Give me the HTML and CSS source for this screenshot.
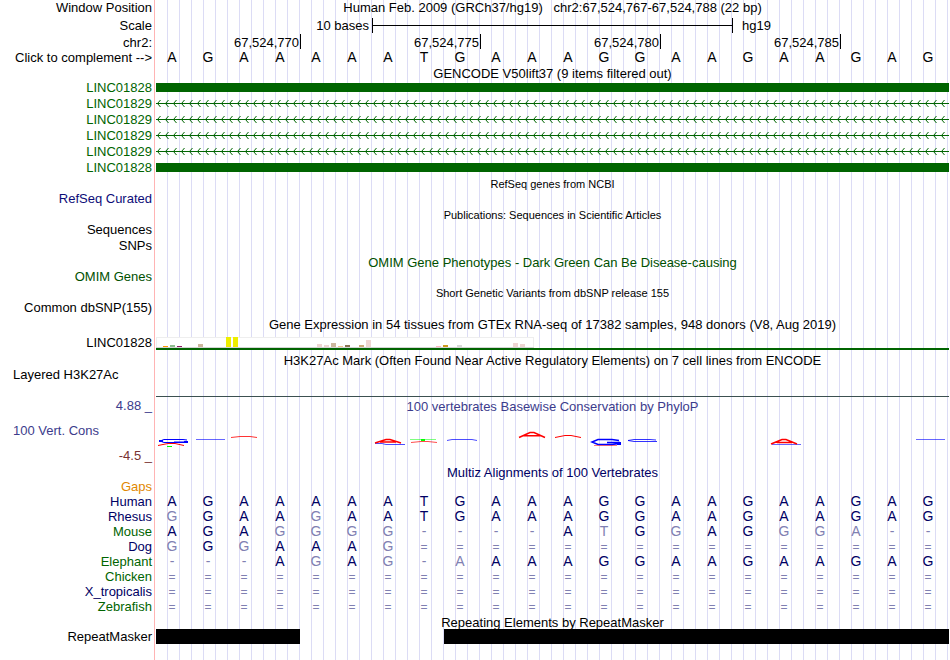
FILE: index.html
```
<!DOCTYPE html>
<html lang="en">
<head>
    <meta charset="UTF-8">
    <meta name="viewport" content="width=device-width, initial-scale=1.0">
    <title>chr2:67,524,767-67,524,788</title>
    <link rel="stylesheet" href="styles.css">
</head>
<body>
    <main class="browser">
        <!-- position, scale and ruler -->
        <div class="row">
            <div class="label">Window Position</div>
            <div class="title">Human Feb. 2009 (GRCh37/hg19) &nbsp; chr2:67,524,767-67,524,788 (22 bp)</div>
        </div>
        <div class="row scale-row">
            <div class="label">Scale</div>
            <div class="scale">
                <span class="scale-text">10 bases</span>
                <span class="scale-bar"></span>
                <span class="scale-db">hg19</span>
            </div>
        </div>
        <div class="row ruler-row">
            <div class="label">chr2:</div>
            <div class="ruler">
                <span class="tick first">67,524,770</span>
                <span class="tick">67,524,775</span>
                <span class="tick">67,524,780</span>
                <span class="tick">67,524,785</span>
            </div>
        </div>
        <div class="row species">
            <div class="label">Click to complement --&gt;</div>
            <div class="seq plain" data-seq="AGAAAAATGAAAGGAAGAAGAG"></div>
        </div>

        <!-- genes -->
        <div class="row head"><div class="title">GENCODE V50lift37 (9 items filtered out)</div></div>
        <div class="row gene">
            <div class="label">LINC01828</div>
            <div class="track"><div class="exon"></div></div>
        </div>
        <div class="row gene">
            <div class="label">LINC01829</div>
            <div class="track">
                <svg class="intron" width="100%" height="9">
                    <defs>
                        <pattern id="arrows" width="8" height="9" patternUnits="userSpaceOnUse">
                            <path d="M4.5 1 L1.5 4.5 L4.5 8" fill="none" stroke="#006400" stroke-width="1"/>
                        </pattern>
                    </defs>
                    <rect width="100%" height="9" fill="url(#arrows)"/>
                    <rect y="4" width="100%" height="1" fill="#006400"/>
                </svg>
            </div>
        </div>
        <div class="row gene">
            <div class="label">LINC01829</div>
            <div class="track">
                <svg class="intron" width="100%" height="9">
                    <rect width="100%" height="9" fill="url(#arrows)"/>
                    <rect y="4" width="100%" height="1" fill="#006400"/>
                </svg>
            </div>
        </div>
        <div class="row gene">
            <div class="label">LINC01829</div>
            <div class="track">
                <svg class="intron" width="100%" height="9">
                    <rect width="100%" height="9" fill="url(#arrows)"/>
                    <rect y="4" width="100%" height="1" fill="#006400"/>
                </svg>
            </div>
        </div>
        <div class="row gene">
            <div class="label">LINC01829</div>
            <div class="track">
                <svg class="intron" width="100%" height="9">
                    <rect width="100%" height="9" fill="url(#arrows)"/>
                    <rect y="4" width="100%" height="1" fill="#006400"/>
                </svg>
            </div>
        </div>
        <div class="row gene">
            <div class="label">LINC01828</div>
            <div class="track"><div class="exon"></div></div>
        </div>

        <!-- dense tracks with nothing in the window -->
        <div class="row head"><div class="title small">RefSeq genes from NCBI</div></div>
        <div class="row"><div class="label blue">RefSeq Curated</div></div>
        <div class="row head"><div class="title small">Publications: Sequences in Scientific Articles</div></div>
        <div class="row"><div class="label">Sequences</div></div>
        <div class="row"><div class="label">SNPs</div></div>
        <div class="row head"><div class="title omim">OMIM Gene Phenotypes - Dark Green Can Be Disease-causing</div></div>
        <div class="row"><div class="label omim">OMIM Genes</div></div>
        <div class="row head"><div class="title small">Short Genetic Variants from dbSNP release 155</div></div>
        <div class="row"><div class="label">Common dbSNP(155)</div></div>

        <!-- GTEx -->
        <div class="row head"><div class="title">Gene Expression in 54 tissues from GTEx RNA-seq of 17382 samples, 948 donors (V8, Aug 2019)</div></div>
        <div class="row gtex">
            <div class="label">LINC01828</div>
            <div class="track">
                <svg class="tissues" width="378" height="11" shape-rendering="crispEdges">
                    <rect width="378" height="11" fill="#eeeeee"/>
                    <rect x="1" y="1" width="376" height="9" fill="#ffffff"/>
                    <rect y="10" width="378" height="1" fill="#d3d3d3"/>
                    <rect x="7" y="9" width="5" height="1" fill="#ff9900"/>
                    <rect x="14" y="8" width="5" height="2" fill="#8fbc8f"/>
                    <rect x="21" y="9" width="5" height="1" fill="#8b1c62"/>
                    <rect x="42" y="7" width="5" height="3" fill="#cdb79e"/>
                    <rect x="70" y="0" width="5" height="10" fill="#eeee00"/>
                    <rect x="77" y="0" width="5" height="10" fill="#eeee00"/>
                    <rect x="161" y="7" width="5" height="3" fill="#eed5d2"/>
                    <rect x="168" y="8" width="5" height="2" fill="#eed5d2"/>
                    <rect x="175" y="6" width="5" height="4" fill="#cdb79e"/>
                    <rect x="182" y="9" width="5" height="1" fill="#eec591"/>
                    <rect x="189" y="8" width="5" height="2" fill="#8b7355"/>
                    <rect x="203" y="8" width="5" height="2" fill="#cdaa7d"/>
                    <rect x="210" y="3" width="5" height="7" fill="#eed5d2"/>
                    <rect x="280" y="9" width="5" height="1" fill="#ffb6c1"/>
                    <rect x="287" y="8" width="5" height="2" fill="#cd9b1d"/>
                    <rect x="301" y="8" width="5" height="2" fill="#d9d9d9"/>
                    <rect x="357" y="6" width="5" height="4" fill="#eed5d2"/>
                    <rect x="364" y="7" width="5" height="3" fill="#eed5d2"/>
                </svg>
                <div class="gene-line"></div>
            </div>
        </div>

        <!-- H3K27Ac -->
        <div class="row head"><div class="title">H3K27Ac Mark (Often Found Near Active Regulatory Elements) on 7 cell lines from ENCODE</div></div>
        <div class="row layered">
            <div class="label left">Layered H3K27Ac</div>
            <div class="track baseline"></div>
        </div>

        <!-- conservation -->
        <div class="row cons">
            <div class="cons-labels">
                <div class="label up">4.88 _</div>
                <div class="label left up">100 Vert. Cons</div>
                <div class="label down">-4.5 _</div>
            </div>
            <div class="cons-plot">
                <div class="title up">100 vertebrates Basewise Conservation by PhyloP</div>
                <svg class="logo" viewBox="0 0 793 24" preserveAspectRatio="xMinYMin meet" fill="none">
                    <g stroke="#0000ff">
                        <path d="M31 9 L27 8.5 H8 L4 10 L8 11.5 H28" stroke-width="1"/>
                        <path d="M3 10 H7 M28 11 H32" stroke-width="2"/>
                        <path d="M18 10.5 H31" stroke-width="1" stroke-opacity=".5"/>
                        <path d="M40 8.5 H69 M760 8.5 H789" stroke-width="1" stroke-opacity=".6"/>
                        <path d="M219 12.5 H226 L230 13.5 H249" stroke-width="1" stroke-opacity=".7"/>
                        <path d="M291 9.5 L296 8.5 H316 L321 9.5" stroke-width="1" stroke-opacity=".7"/>
                        <path d="M463 9.5 L456 8.5 H442 L436 11 L442 13.5 H456 L463 12.5 M451 11.5 H464" stroke-width="1.5"/>
                        <path d="M461 12.5 H465" stroke-width="3"/>
                        <path d="M500 9 L494 8.5 H478 L472 9.5 L478 10.5 H501" stroke-width="1" stroke-opacity=".8"/>
                        <path d="M616 13.5 H645" stroke-width="1" stroke-opacity=".6"/>
                    </g>
                    <g stroke="#ff0000">
                        <path d="M2 14.5 L12 12.5 H19 L28 14.5" stroke-width="1"/>
                        <path d="M75 6.5 L84 5.5 H94 L101 6.5" stroke-width="1" stroke-opacity=".8"/>
                        <path d="M219 12 L230 8.5 H234 L245 12 M224 11 H240" stroke-width="1.4"/>
                        <path d="M255 11.5 L265 10.5 H272 L281 11.5" stroke-width="1" stroke-opacity=".7"/>
                        <path d="M363 6.5 L374 1.5 H378 L389 6.5 M368 4.8 H384" stroke-width="1.5"/>
                        <path d="M399 6.5 L409 4.5 H415 L425 6.5" stroke-width="1"/>
                        <path d="M438 14.5 H461" stroke-width="1" stroke-opacity=".5"/>
                        <path d="M615 13 L626 8.5 H630 L641 13 M621 11.5 H636" stroke-width="1.5"/>
                    </g>
                    <g stroke="#00ff00">
                        <path d="M11 15.5 H16" stroke-width="1"/>
                        <path d="M254 8.5 H280" stroke-width="1" stroke-opacity=".5"/>
                        <path d="M265 9 H269" stroke-width="2"/>
                    </g>
                </svg>
            </div>
        </div>

        <!-- alignments -->
        <div class="row head"><div class="title navy">Multiz Alignments of 100 Vertebrates</div></div>
        <div class="row species"><div class="label orange">Gaps</div></div>
        <div class="row species">
            <div class="label navy">Human</div>
            <div class="seq" data-seq="AGAAAAATGAAAGGAAGAAGAG"></div>
        </div>
        <div class="row species">
            <div class="label navy">Rhesus</div>
            <div class="seq" data-seq="GGAAGAATGAAAGGAAGAAGAG"></div>
        </div>
        <div class="row species">
            <div class="label green">Mouse</div>
            <div class="seq" data-seq="AGAGGGG----ATGGAGGGA--"></div>
        </div>
        <div class="row species">
            <div class="label navy">Dog</div>
            <div class="seq" data-seq="GGGAAAG==============="></div>
        </div>
        <div class="row species">
            <div class="label green">Elephant</div>
            <div class="seq" data-seq="---AGAG-AAAAGGAAGAAGAG"></div>
        </div>
        <div class="row species">
            <div class="label green">Chicken</div>
            <div class="seq" data-seq="======================"></div>
        </div>
        <div class="row species">
            <div class="label navy">X_tropicalis</div>
            <div class="seq" data-seq="======================"></div>
        </div>
        <div class="row species">
            <div class="label green">Zebrafish</div>
            <div class="seq" data-seq="======================"></div>
        </div>

        <!-- repeats -->
        <div class="row head"><div class="title">Repeating Elements by RepeatMasker</div></div>
        <div class="row species">
            <div class="label">RepeatMasker</div>
            <div class="repeats">
                <div class="repeat short"></div>
                <div class="repeat long"></div>
            </div>
        </div>
    </main>
    <script src="script.js"></script>
</body>
</html>
```

FILE: styles.css
```
:root {
    --label-width: 152px;
    --base: 36px;
    --green: #006400;
    --navy: #000064;
    --phylo: #3c3c8c;
}

body {
    margin: 0;
    background: #ffffff;
    color: #000000;
    font-family: "Liberation Sans", Arial, sans-serif;
    font-size: 13px;
    line-height: 15px;
}

/* red divider and the blue guide lines behind every track */
.browser {
    min-height: 100vh;
    box-sizing: border-box;
    padding-right: 1px;
    background:
        linear-gradient(#ffb4b4, #ffb4b4) 154px 0 / 1px 100% no-repeat,
        linear-gradient(#ffffff, #ffffff) 0 0 / 156px 100% no-repeat,
        repeating-linear-gradient(to right, transparent 0 11px, #dcdcf5 11px 12px) 156px 0;
}

.row {
    display: flex;
    gap: 4px;
    height: 16px;
}

.head,
.species {
    height: 15px;
}

.label {
    width: var(--label-width);
    flex: none;
    text-align: right;
    white-space: nowrap;
}

.label.left {
    box-sizing: border-box;
    padding-left: 13px;
    text-align: left;
}

.title {
    flex: 1;
    text-align: center;
    white-space: nowrap;
}

.head .title {
    margin-left: 156px;
    padding-top: 1px;
}

.small {
    font-size: 11px;
}

.blue { color: #0c0c78; }
.navy { color: var(--navy); }
.green { color: var(--green); }
.omim { color: #005000; }
.orange { color: #e18700; }
.up { color: var(--phylo); }
.down { color: #783232; }

.track {
    flex: 1;
}

/* scale */
.scale-row {
    height: 18px;
    align-items: center;
}

.scale {
    flex: 1;
    display: flex;
    align-items: center;
}

.scale-text {
    width: 213px;
    text-align: right;
}

.scale-bar {
    width: 359px;
    height: 15px;
    margin: 0 9px 0 3px;
    border-left: 1px solid #000000;
    border-right: 1px solid #000000;
    background: linear-gradient(#000000, #000000) 0 7px / 100% 1px no-repeat;
}

/* ruler, one tick every five bases */
.ruler-row .label {
    padding-top: 1px;
}

.ruler {
    flex: 1;
    display: flex;
}

.tick {
    box-sizing: border-box;
    width: calc(var(--base) * 5);
    height: 15px;
    padding: 1px 1px 0 0;
    border-right: 1px solid #000000;
    text-align: right;
}

.tick.first {
    width: calc(var(--base) * 4 + 1px);
}

/* bases */
.seq {
    flex: 1;
    display: grid;
    grid-template-columns: repeat(22, 1fr);
    padding-right: 1px;
    color: var(--navy);
    font-size: 14px;
}

.seq span {
    padding-right: 4px;
    text-align: center;
}

.seq .diff {
    color: #8080b2;
}

.seq .gap {
    padding-top: 1px;
    font-size: 12px;
}

.seq.plain {
    color: #000000;
}

/* genes */
.gene .label {
    color: var(--green);
}

.exon {
    height: 9px;
    margin-top: 3px;
    background: var(--green);
}

.intron {
    display: block;
    margin-top: 3px;
}

.gtex {
    height: 21px;
}

.gtex .label {
    padding-top: 4px;
}

.tissues {
    display: block;
    margin-top: 6px;
}

.gene-line {
    height: 2px;
    background: var(--green);
}

.layered {
    height: 30px;
}

.baseline {
    border-bottom: 1px solid #3c5050;
}

/* conservation */
.cons {
    height: 67px;
}

.cons-labels {
    display: flex;
    flex-direction: column;
    justify-content: space-between;
    height: 66px;
    padding-top: 1px;
    box-sizing: border-box;
}

.cons-plot {
    flex: 1;
    padding-top: 2px;
}

.logo {
    display: block;
    width: 100%;
    height: 24px;
    margin-top: 17px;
}

/* repeats */
.repeats {
    flex: 1;
    display: flex;
    justify-content: space-between;
}

.repeat {
    background: #000000;
}

.short {
    width: calc(var(--base) * 4);
}

.long {
    width: calc(var(--base) * 14 + 1px);
}
```

FILE: script.js
```
var human = "AGAAAAATGAAAGGAAGAAGAG";

document.querySelectorAll(".seq").forEach(function (row) {
    var seq = row.dataset.seq;
    for (var i = 0; i < seq.length; i++) {
        var cell = document.createElement("span");
        cell.textContent = seq[i];
        // bases that differ from human are drawn lighter
        if (seq[i] != human[i]) {
            cell.classList.add("diff");
        }
        if (seq[i] == "=") {
            cell.classList.add("gap");
        }
        row.appendChild(cell);
    }
});
```
